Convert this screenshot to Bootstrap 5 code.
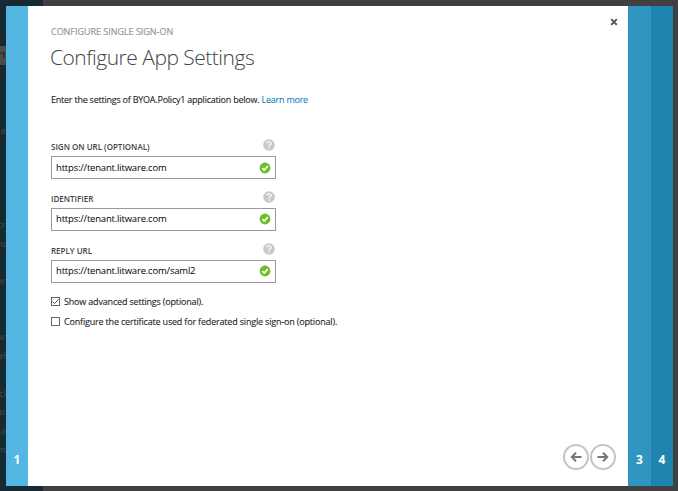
<!DOCTYPE html>
<html lang="en">
<head>
<meta charset="utf-8">
<meta name="viewport" content="width=device-width, initial-scale=1">
<title>Configure App Settings</title>
<link href="https://cdn.jsdelivr.net/npm/bootstrap@5.3.0/dist/css/bootstrap.min.css" rel="stylesheet">
<style>
body{background:#404040;font-family:"Open Sans","Noto Sans",sans-serif;font-size:9px;line-height:12px;color:#333;height:491px;overflow:hidden}
.backdrop-nav{width:43px;height:491px;background:#152a32;color:#3c4549;padding-top:46px;font-weight:600}
.backdrop-nav div{width:6px;height:18.75px;line-height:18.75px;direction:rtl;overflow:hidden;white-space:nowrap}
.backdrop-nav .current{background:#4b4b4b;color:#1d1d1d;height:19px;margin-bottom:57px}
.backdrop-nav .group-gap{margin-bottom:75px}
.wizard{left:6px;top:6px;width:667px;height:480px;background:#fff}
.step{width:22px;color:#fff;font-size:12px;font-weight:700;line-height:16px;padding-bottom:18px}
.step-1{background:#54b7e3}
.step-3{background:#3195c1;width:23px}
.step-4{background:#1f83b0}
.pane{padding:19px 12px 16px 23px}
.close-btn{top:12px;right:10px}
.eyebrow{font-size:9px;line-height:14px;color:#999;letter-spacing:-.03px;-webkit-text-stroke:.2px #999}
.title{font-size:21px;font-weight:300;line-height:30px;margin:3px 0 0 -1px;color:#444;letter-spacing:-.5px}
.intro{margin-top:21px;line-height:14px;letter-spacing:-.23px;color:#222;-webkit-text-stroke:.1px currentColor}
.intro a{color:#1280bd;text-decoration:none}
.fields{width:225px;margin-top:32px}
.field{height:51.8px}
.field-label{font-size:8px;font-weight:600;line-height:16px;color:#444}
.field .form-control{height:23px;margin-top:1px;padding:0 4px;border:1px solid #999;border-radius:0;font-size:9.5px;line-height:20px;color:#000;box-shadow:none}
.field input{border:0;outline:0;padding:0;background:none;width:190px;color:#000;letter-spacing:-.19px}
.help{margin-right:1px}
.box{width:9px;height:9px;border:1px solid #666;background:#fff;margin-right:4px;margin-top:-2px}
.checks{margin-top:-2px}
.check-row{height:20px;letter-spacing:-.18px;color:#222;-webkit-text-stroke:.1px currentColor}
.pager{gap:1px}
.round{width:26px;height:26px;padding:0;border:2px solid #c4c4c4;border-radius:50%;background:#fff}
svg{display:block}
</style>
<script src="https://cdn.jsdelivr.net/npm/bootstrap@5.3.0/dist/js/bootstrap.bundle.min.js"></script>
</head>
<body>
<svg class="d-none">
  <symbol id="help" viewBox="0 0 12 12"><circle cx="6" cy="6" r="5.8" fill="#c8c8c8"/><path d="M4 4.5C4.1 2.3 8 2.3 8 4.4C8 5.8 6.1 5.7 6.1 7.3M6.1 8.2v1.4" fill="none" stroke="#fff" stroke-width="1.4"/></symbol>
  <symbol id="valid" viewBox="0 0 12 12"><circle cx="6" cy="6" r="5.4" fill="#6fbe28"/><path d="M3.3 6.1L5.2 8L8.8 4.2" fill="none" stroke="#fff" stroke-width="1.7"/></symbol>
</svg>
<aside class="backdrop-nav" aria-hidden="true">
  <div class="current">r1</div>
  <div class="group-gap">e</div>
  <div>cr</div><div>Bu</div><div></div><div>er</div><div></div><div></div><div>ur</div><div>el</div><div></div><div>cl</div><div>ar</div><div>na</div><div>am</div>
</aside>
<main class="wizard position-absolute d-flex">
  <div class="step step-1 d-flex align-items-end justify-content-center">1</div>
  <section class="pane flex-grow-1 d-flex flex-column position-relative">
    <button class="close-btn btn p-0 border-0 position-absolute" aria-label="Close"><svg width="8" height="8" viewBox="0 0 8 8"><path d="M1.2 1.2L6.8 6.8M6.8 1.2L1.2 6.8" stroke="#555" stroke-width="1.9"/></svg></button>
    <div class="eyebrow">CONFIGURE SINGLE SIGN-ON</div>
    <h1 class="title">Configure App Settings</h1>
    <p class="intro mb-0">Enter the settings of BYOA.Policy1 application below. <a href="#">Learn more</a></p>
    <form class="fields">
      <div class="field">
        <div class="d-flex justify-content-between align-items-start"><label class="field-label" for="signon">SIGN ON URL (OPTIONAL)</label><svg class="help" width="12" height="12"><use href="#help"/></svg></div>
        <div class="form-control d-flex align-items-center justify-content-between"><input id="signon" value="https://tenant.litware.com"><svg width="12" height="12"><use href="#valid"/></svg></div>
      </div>
      <div class="field">
        <div class="d-flex justify-content-between align-items-start"><label class="field-label" for="ident">IDENTIFIER</label><svg class="help" width="12" height="12"><use href="#help"/></svg></div>
        <div class="form-control d-flex align-items-center justify-content-between"><input id="ident" value="https://tenant.litware.com"><svg width="12" height="12"><use href="#valid"/></svg></div>
      </div>
      <div class="field">
        <div class="d-flex justify-content-between align-items-start"><label class="field-label" for="reply">REPLY URL</label><svg class="help" width="12" height="12"><use href="#help"/></svg></div>
        <div class="form-control d-flex align-items-center justify-content-between"><input id="reply" value="https://tenant.litware.com/saml2"><svg width="12" height="12"><use href="#valid"/></svg></div>
      </div>
    </form>
    <div class="checks">
      <div class="check-row d-flex align-items-center text-nowrap"><span class="box"><svg width="7" height="7" viewBox="0 0 7 7"><path d="M.6 3.6L2.6 5.6L6.5 1.3" fill="none" stroke="#555"/></svg></span>Show advanced settings (optional).</div>
      <div class="check-row d-flex align-items-center text-nowrap"><span class="box"></span>Configure the certificate used for federated single sign-on (optional).</div>
    </div>
    <div class="pager mt-auto d-flex justify-content-end">
      <button class="round d-flex align-items-center justify-content-center" aria-label="Back"><svg width="12" height="10" viewBox="0 0 12 10"><path d="M11.5 5H2M6 .8L1.8 5L6 9.2" fill="none" stroke="#777" stroke-width="2"/></svg></button>
      <button class="round d-flex align-items-center justify-content-center" aria-label="Next"><svg width="12" height="10" viewBox="0 0 12 10"><path d="M.5 5H10M6 .8L10.2 5L6 9.2" fill="none" stroke="#777" stroke-width="2"/></svg></button>
    </div>
  </section>
  <div class="step step-3 d-flex align-items-end justify-content-center">3</div>
  <div class="step step-4 d-flex align-items-end justify-content-center">4</div>
</main>
</body>
</html>
